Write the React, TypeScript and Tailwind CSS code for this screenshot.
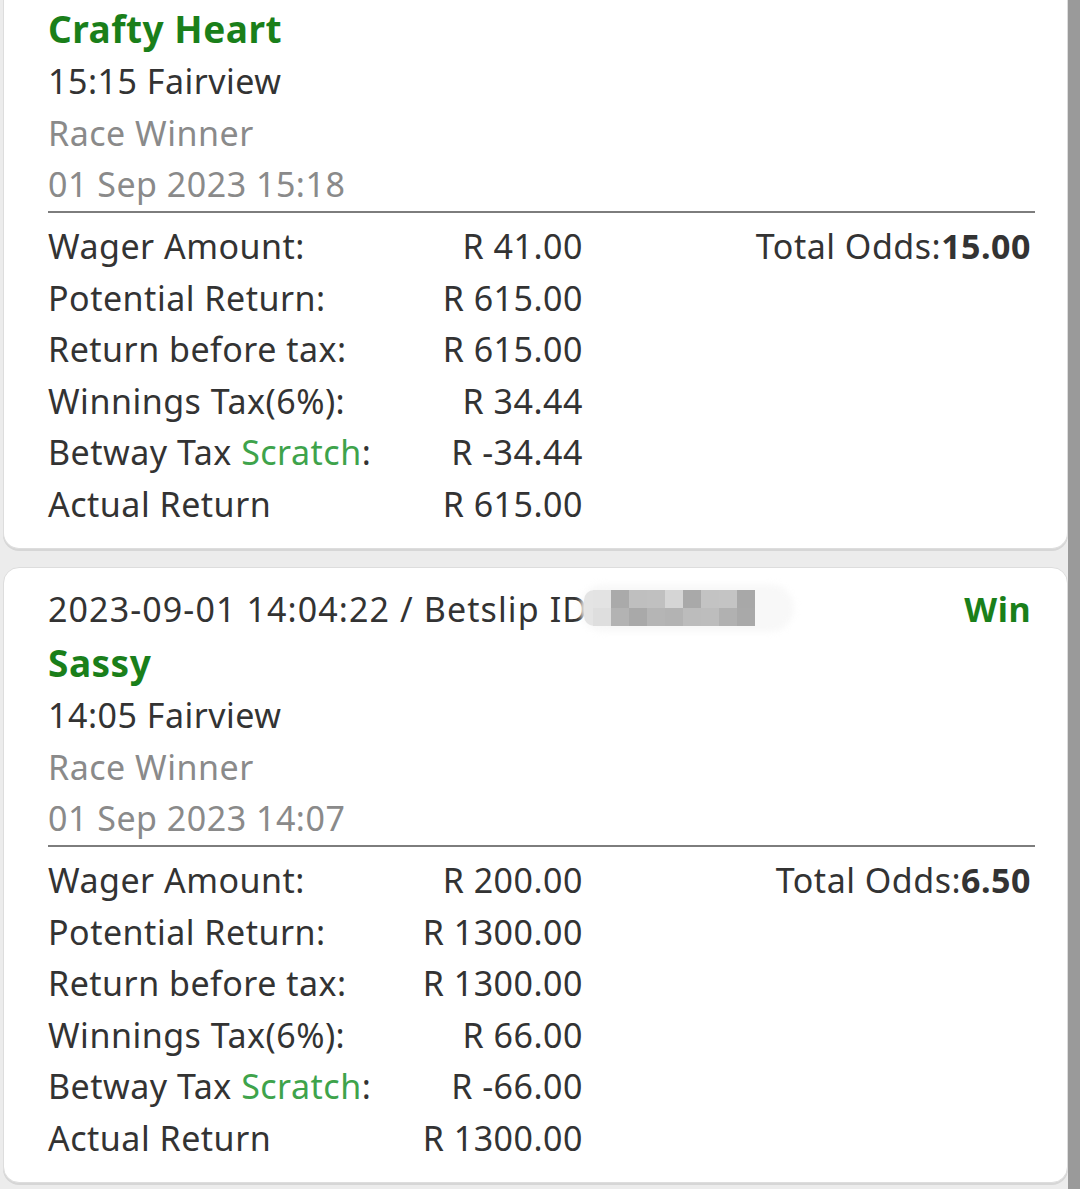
import React from "react";

type Bet = {
  stamp?: string;
  horse: string;
  race: string;
  market: string;
  settled: string;
  wager: string;
  potential: string;
  beforeTax: string;
  tax: string;
  scratch: string;
  actual: string;
  odds: string;
};

const bets: Bet[] = [
  {
    horse: "Crafty Heart",
    race: "15:15 Fairview",
    market: "Race Winner",
    settled: "01 Sep 2023 15:18",
    wager: "R 41.00",
    potential: "R 615.00",
    beforeTax: "R 615.00",
    tax: "R 34.44",
    scratch: "R -34.44",
    actual: "R 615.00",
    odds: "15.00",
  },
  {
    stamp: "2023-09-01 14:04:22 / Betslip ID",
    horse: "Sassy",
    race: "14:05 Fairview",
    market: "Race Winner",
    settled: "01 Sep 2023 14:07",
    wager: "R 200.00",
    potential: "R 1300.00",
    beforeTax: "R 1300.00",
    tax: "R 66.00",
    scratch: "R -66.00",
    actual: "R 1300.00",
    odds: "6.50",
  },
];

// pixelated blur over the betslip number
const mosaicTop = ["#e3e3e3", "#aaaaaa", "#bfbfbf", "#c0c0c0", "#d5d5d5", "#a9a9a9", "#c3c3c3", "#c4c4c4", "#a8a8a8"];
const mosaicBottom = ["#dedede", "#b3b3b3", "#a9a9a9", "#b5b5b5", "#b3b3b3", "#bcbcbc", "#bdbdbd", "#b1b1b1", "#a9a9a9"];

const Mosaic = () => (
  <div className="absolute left-[536px] top-[8px] h-[36px] w-[210px]">
    <div className="absolute -left-[4px] -top-[6px] h-[48px] w-[214px] rounded-full bg-[#f8f8f8] blur-[3px]" />
    <div className="absolute left-0 top-0 h-[36px] w-[14px] rounded-l-[10px] bg-[#e4e4e4]" />
    <div className="absolute left-[9px] top-0 grid grid-cols-[repeat(9,18px)] grid-rows-[18px_18px]">
      {mosaicTop.map((c, i) => (
        <div key={"t" + i} style={{ background: c }} />
      ))}
      {mosaicBottom.map((c, i) => (
        <div key={"b" + i} style={{ background: c }} />
      ))}
    </div>
  </div>
);

const Row = ({ label, value, odds }: { label: React.ReactNode; value: string; odds?: string }) => (
  <div className="grid h-[51.5px] grid-cols-[360px_175px_1fr] items-center">
    <span className="whitespace-nowrap">{label}</span>
    <span className="text-right">{value}</span>
    <span className="pr-[4px] text-right">
      {odds && (
        <>
          Total Odds:<b className="font-bold">{odds}</b>
        </>
      )}
    </span>
  </div>
);

const BetCard = ({ bet, first }: { bet: Bet; first?: boolean }) => (
  <div
    className={
      first
        ? "rounded-b-[16px] border-x border-b border-[#dddddd] bg-white pb-[18px] pl-[44px] pr-[32px] pt-[2px] shadow-[0_2px_0_#d6d6d6]"
        : "rounded-[16px] border border-[#dddddd] bg-white pb-[18px] pl-[44px] pr-[32px] pt-[14px] shadow-[0_2px_0_#d6d6d6]"
    }
  >
    {bet.stamp && (
      <div className="relative flex h-[54px] items-center justify-between text-[#333333]">
        <span className="whitespace-nowrap tracking-[1.1px]">{bet.stamp}</span>
        <Mosaic />
        <span className="pr-[4px] font-bold text-[#1a7f1a]">Win</span>
      </div>
    )}
    <div className="flex h-[53px] items-center text-[37px] font-bold text-[#1a7f1a]">{bet.horse}</div>
    <div className="flex h-[52px] items-center text-[#333333]">{bet.race}</div>
    <div className="flex h-[52px] items-center text-[#8a8a8a]">{bet.market}</div>
    <div className="flex h-[51px] items-center text-[#8a8a8a]">{bet.settled}</div>
    <div className="mt-[1px] h-[2px] bg-[#7d7d7d]" />
    <div className="mt-[8px] text-[#333333]">
      <Row label="Wager Amount:" value={bet.wager} odds={bet.odds} />
      <Row label="Potential Return:" value={bet.potential} />
      <Row label="Return before tax:" value={bet.beforeTax} />
      <Row label="Winnings Tax(6%):" value={bet.tax} />
      <Row
        label={
          <>
            Betway Tax <span className="text-[#3ea34b]">Scratch</span>:
          </>
        }
        value={bet.scratch}
      />
      <Row label="Actual Return" value={bet.actual} />
    </div>
  </div>
);

export default function App() {
  return (
    <div className="h-[1189px] overflow-hidden bg-[#ececec] font-['Noto_Sans',sans-serif] text-[34px] tracking-[0.5px]">
      <div className="flex">
        <div className="flex w-[1068px] flex-col gap-[18px] pl-[3px]">
          {bets.map((b, i) => (
            <BetCard key={b.horse} bet={b} first={i === 0} />
          ))}
        </div>
        <div className="h-[1189px] w-[12px] bg-[#9a9a9a]" />
      </div>
    </div>
  );
}
